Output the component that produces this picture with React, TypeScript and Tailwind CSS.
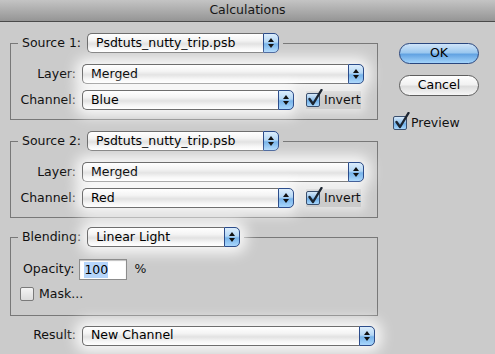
import React from 'react';

const font = { fontFamily: '"DejaVu Sans", "Liberation Sans", sans-serif' };

// aqua popup button with the blue stepper segment on the right
const Popup: React.FC<{ value: string; w: string; glow?: boolean }> = ({ value, w, glow = true }) => (
  <div
    className={`flex h-[20px] rounded-[5px] ${w} ${
      glow ? 'shadow-[0_0_14px_6px_rgba(255,255,255,0.9)]' : ''
    }`}
  >
    <div className="flex flex-1 items-center rounded-l-[5px] border-y border-l border-[#6e6e6e] bg-[linear-gradient(to_bottom,#ffffff,#f4f4f4_35%,#e2e2e2_55%,#f6f6f6_80%,#ffffff)] pl-[8px] text-[12.5px] text-black">
      {value}
    </div>
    <div className="flex w-[16px] flex-col items-center justify-center gap-[2px] rounded-r-[5px] border border-[#2c4c8a] bg-[linear-gradient(to_bottom,#dcedfc,#b4d7f5_45%,#78b4ea_55%,#a8d6fc)]">
      <svg width="6" height="4" viewBox="0 0 6 4">
        <polygon points="3,0 6,4 0,4" fill="#111" />
      </svg>
      <svg width="6" height="4" viewBox="0 0 6 4">
        <polygon points="0,0 6,0 3,4" fill="#111" />
      </svg>
    </div>
  </div>
);

const Checkbox: React.FC<{ checked?: boolean }> = ({ checked }) => (
  <span className="relative inline-block h-[14px] w-[14px] shrink-0">
    <span
      className={`block h-[14px] w-[14px] rounded-[2px] border ${
        checked
          ? 'border-[#3a4f6e] bg-[linear-gradient(to_bottom,#d6e9fa,#8fc0ec_50%,#6fb0ea_55%,#a8d6fb)]'
          : 'border-[#7a7a7a] bg-[linear-gradient(to_bottom,#f4f4f4,#dcdcdc)]'
      }`}
    />
    {checked && (
      <svg className="absolute left-[1px] top-[-4px]" width="16" height="18" viewBox="0 0 16 18">
        <path d="M2.5 10 L6 15 L14.5 1" fill="none" stroke="#1b2430" strokeWidth="2.4" strokeLinecap="round" strokeLinejoin="round" />
      </svg>
    )}
  </span>
);

const Label: React.FC<{ children: React.ReactNode }> = ({ children }) => (
  <span className="w-[58px] text-right text-[12.5px] text-[#111]">{children}</span>
);

const SourceGroup: React.FC<{ n: number; channel: string; top: string }> = ({ n, channel, top }) => (
  <fieldset className={`${top} w-[368px] border border-[#787878] px-[7px] pb-[9px]`}>
    <legend className="flex items-center gap-[6px] px-[4px]">
      <span className="text-[12.5px] text-[#111]">Source {n}:</span>
      <Popup value="Psdtuts_nutty_trip.psb" w="w-[192px]" glow={false} />
    </legend>
    <div className="mt-[11px] flex items-center gap-[6px]">
      <Label>Layer:</Label>
      <Popup value="Merged" w="w-[282px]" />
    </div>
    <div className="mt-[6px] flex items-center gap-[6px]">
      <Label>Channel:</Label>
      <Popup value={channel} w="w-[212px]" />
      <div className="ml-[6px] flex items-center gap-[4px] shadow-[0_0_10px_4px_rgba(255,255,255,0.5)]">
        <Checkbox checked />
        <span className="text-[12.5px] text-[#111]">Invert</span>
      </div>
    </div>
  </fieldset>
);

export default function App() {
  return (
    <div style={font} className="h-[354px] w-[495px] overflow-hidden bg-[#cbcbcb]">
      <div className="flex h-[22px] items-center justify-center border-b border-[#4a4a4a] bg-[linear-gradient(to_bottom,#c4c4c4,#959595)] text-[12.5px] text-[#161616]">
        Calculations
      </div>

      <div className="flex items-start pl-[10px]">
        <div className="flex flex-col">
          <SourceGroup n={1} channel="Blue" top="mt-[11px]" />
          <SourceGroup n={2} channel="Red" top="mt-[11px]" />

          <fieldset className="mt-[9px] w-[368px] border border-[#787878] px-[7px] pb-[11px]">
            <legend className="flex items-center gap-[6px] px-[4px]">
              <span className="text-[12.5px] text-[#111]">Blending:</span>
              <Popup value="Linear Light" w="w-[153px]" />
            </legend>
            <div className="mt-[12px] flex items-center pl-[5px]">
              <span className="text-[12.5px] text-[#111]">Opacity:</span>
              <div className="ml-[5px] flex h-[21px] w-[48px] items-center border border-[#8c8c8c] bg-white pl-[4px] shadow-[inset_0_1px_1px_rgba(0,0,0,0.25)]">
                <span className="bg-[#b5d5fb] text-[12.5px] leading-[16px] text-black">100</span>
              </div>
              <span className="ml-[7px] text-[12.5px] text-[#111]">%</span>
            </div>
            <div className="mt-[5px] flex items-center gap-[5px] pl-[2px]">
              <Checkbox />
              <span className="text-[12.5px] text-[#111]">Mask...</span>
            </div>
          </fieldset>

          <div className="mt-[10px] flex items-center gap-[6px] pl-[8px]">
            <Label>Result:</Label>
            <Popup value="New Channel" w="w-[293px]" />
          </div>
        </div>

        <div className="ml-[15px] mt-[21px] flex flex-col">
          <button className="ml-[6px] h-[21px] w-[80px] rounded-full border border-[#29467e] bg-[linear-gradient(to_bottom,#cfe4f8,#9cc8ef_45%,#63a3e2_55%,#a3d4fb)] text-[12.5px] text-black">
            OK
          </button>
          <button className="ml-[6px] mt-[11px] h-[21px] w-[80px] rounded-full border border-[#5e5e5e] bg-[linear-gradient(to_bottom,#ffffff,#f1f1f1_45%,#dddddd_55%,#f7f7f7)] text-[12.5px] text-black">
            Cancel
          </button>
          <div className="mt-[18px] flex items-center gap-[4px]">
            <Checkbox checked />
            <span className="text-[12.5px] text-[#111]">Preview</span>
          </div>
        </div>
      </div>
    </div>
  );
}
